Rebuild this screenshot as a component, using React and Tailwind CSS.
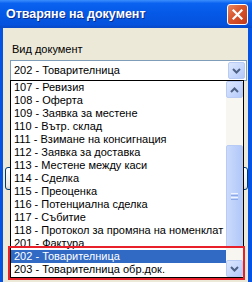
import React from "react";

const items = [
    "107 - Ревизия",
    "108 - Оферта",
    "109 - Заявка за местене",
    "110 - Вътр. склад",
    "111 - Взимане на консигнация",
    "112 - Заявка за доставка",
    "113 - Местене между каси",
    "114 - Сделка",
    "115 - Преоценка",
    "116 - Потенциална сделка",
    "117 - Събитие",
    "118 - Протокол за промяна на номенклат",
    "201 - Фактура",
    "202 - Товарителница",
    "203 - Товарителница обр.док.",
];

const Chevron = ({ up }) => (
    <svg width="9" height="6" viewBox="0 0 9 6">
        <path
            d={up ? "M1 5 L4.5 1.5 L8 5" : "M1 1 L4.5 4.5 L8 1"}
            fill="none"
            stroke="#4D6185"
            strokeWidth="2"
        />
    </svg>
);

const ArrowButton = ({ up }) => (
    <div className="w-[17px] h-[17px] shrink-0 rounded-[2px] border border-[#B7CBF5] bg-[linear-gradient(135deg,#DCE7FD_0%,#C5D6FC_60%,#B4C9F8_100%)] flex items-center justify-center">
        <Chevron up={up} />
    </div>
);

// buttons of the dialog, almost fully hidden behind the open list
const XpButton = () => (
    <div className="h-[23px] w-[75px] rounded-[3px] border border-[#003C74] bg-[linear-gradient(to_bottom,#FFFFFF,#ECEBE6_85%,#D6D0C5)]" />
);

export default function App() {
    return (
        <div className="w-[252px] h-[282px] overflow-hidden relative flex flex-col bg-[#0553E2] font-['Liberation_Sans',Arial,sans-serif]">
            {/* title bar */}
            <div className="h-[28px] shrink-0 flex items-center justify-between pl-[6px] pr-[4px] bg-[linear-gradient(to_bottom,#3C8EFC_0%,#0A62F0_12%,#0558E6_50%,#0452DD_88%,#0848C4_100%)]">
                <span className="text-white font-bold text-[12.5px] [text-shadow:1px_1px_0_#0A2A8A]">
                    Отваряне на документ
                </span>
                <div className="w-[21px] h-[21px] rounded-[3px] border border-white bg-[linear-gradient(135deg,#E9865F_0%,#D8542C_45%,#C2391A_100%)] flex items-center justify-center">
                    <svg width="11" height="11" viewBox="0 0 11 11">
                        <path d="M1.5 1.5 L9.5 9.5 M9.5 1.5 L1.5 9.5" stroke="white" strokeWidth="2.2" strokeLinecap="square" />
                    </svg>
                </div>
            </div>

            {/* dialog body */}
            <div className="flex-1 ml-[3px] mr-[4px] bg-[#ECE9D8] pt-[15px] pl-[7px] pr-[1px] flex flex-col">
                <div className="pl-[2px] text-[11px] leading-[13px] text-black">Вид документ</div>
                <div className="mt-[4px] h-[21px] border border-[#7F9DB9] bg-white flex items-center justify-between pl-[3px] pr-[1px]">
                    <span className="text-[11px] text-black">202 - Товарителница</span>
                    <ArrowButton />
                </div>
                <div className="mt-[86px] -ml-[5px] mr-[-1px] flex justify-between">
                    <XpButton />
                    <XpButton />
                </div>
            </div>

            {/* open dropdown list */}
            <div className="absolute left-[10px] top-[80px] w-[234px] h-[198px] border border-black bg-white flex">
                <div className="flex-1 flex flex-col">
                    {items.map((it) => (
                        <div
                            key={it}
                            className={
                                "h-[13px] leading-[13px] pl-[3px] text-[11px] whitespace-nowrap overflow-hidden " +
                                (it.startsWith("202") ? "bg-[#316AC5] text-white" : "text-black")
                            }
                        >
                            {it}
                        </div>
                    ))}
                </div>
                <div className="w-[17px] flex flex-col bg-[#F7F6F1]">
                    <ArrowButton up />
                    <div className="flex-1 flex flex-col pt-[47px] pb-[12px]">
                        <div className="flex-1 rounded-[2px] border border-[#B7CBF5] bg-[linear-gradient(to_right,#CBDAFC,#BBCFFA_60%,#B0C7F8)] flex items-center justify-center">
                            <div className="flex flex-col gap-[1px]">
                                <div className="w-[7px] h-[1px] bg-[#EEF3FE]" />
                                <div className="w-[7px] h-[1px] bg-[#8CA8E6]" />
                                <div className="w-[7px] h-[1px] bg-[#EEF3FE]" />
                                <div className="w-[7px] h-[1px] bg-[#8CA8E6]" />
                            </div>
                        </div>
                    </div>
                    <ArrowButton />
                </div>
            </div>

            {/* red annotation box */}
            <div className="absolute left-[8px] top-[246px] w-[237px] h-[34px] border-2 border-[#E8202A]" />
        </div>
    );
}
